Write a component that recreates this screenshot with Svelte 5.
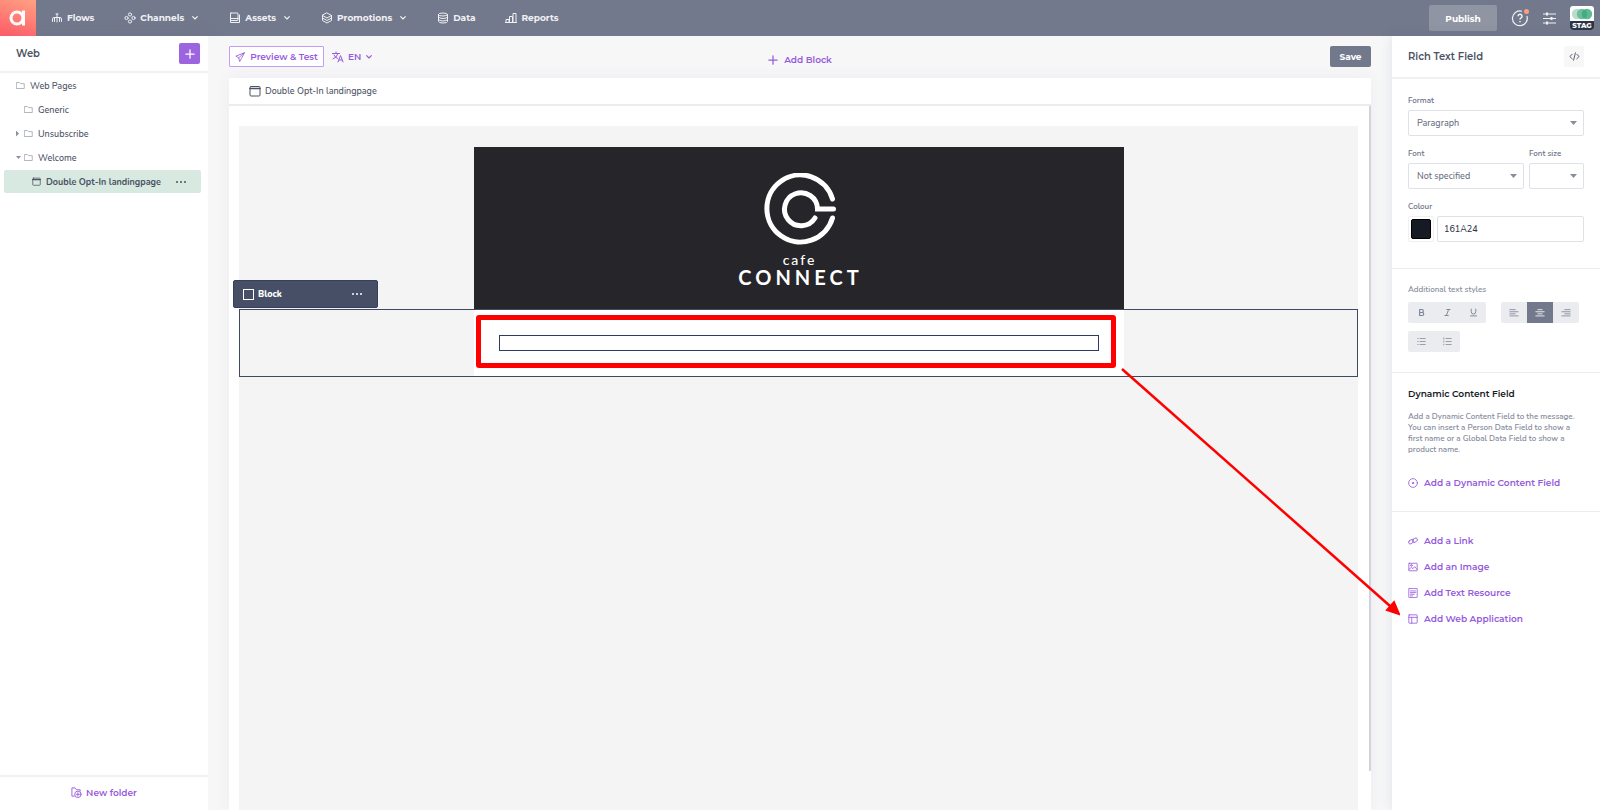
<script>
  const nav = [
    { label: 'Flows', icon: 'flows' },
    { label: 'Channels', icon: 'channels', menu: true },
    { label: 'Assets', icon: 'assets', menu: true },
    { label: 'Promotions', icon: 'promotions', menu: true },
    { label: 'Data', icon: 'data' },
    { label: 'Reports', icon: 'reports' },
  ]

  const folders = [
    { label: 'Web Pages', level: 0 },
    { label: 'Generic', level: 1 },
    { label: 'Unsubscribe', level: 1, arrow: 'closed' },
    { label: 'Welcome', level: 1, arrow: 'open' },
  ]

  const inserts = [
    { label: 'Add a Link', icon: 'link' },
    { label: 'Add an Image', icon: 'image' },
    { label: 'Add Text Resource', icon: 'text' },
    { label: 'Add Web Application', icon: 'app' },
  ]

  let align = $state('center')
  let colour = $state('161A24')
</script>

<svelte:head>
  <title>Web - Double Opt-In landingpage</title>
</svelte:head>

{#snippet icon(name, size = 12)}
  <svg class="icon" width={size} height={size} viewBox="0 0 24 24" fill="none" stroke="currentColor" stroke-width="2" stroke-linecap="round" stroke-linejoin="round" aria-hidden="true">
    {#if name === 'flows'}
      <path d="M12 4v16M3 19v-5q0-3 3-3h12q3 0 3 3v5M7 11v8M17 11v8M10 4h4"/>
    {:else if name === 'channels'}
      <circle cx="12" cy="5" r="3.2"/><circle cx="5" cy="12" r="3.2"/><circle cx="19" cy="12" r="3.2"/><circle cx="12" cy="19" r="3.2"/>
    {:else if name === 'assets'}
      <rect x="3" y="2" width="15" height="15" rx="1"/>
      <path d="M21 6v15H7M3 13h15M3 17v4h4"/>
    {:else if name === 'promotions'}
      <path d="M12 2l9 5-9 5-9-5zM3 7v10l9 5 9-5V7M3 12l9 5 9-5"/>
    {:else if name === 'data'}
      <ellipse cx="12" cy="5" rx="9" ry="3"/>
      <path d="M3 5v14q0 3 9 3t9-3V5M3 10q0 3 9 3t9-3M3 15q0 3 9 3t9-3"/>
    {:else if name === 'reports'}
      <path d="M1 21h22M2 21v-6h6v6M9 21V9h6v12M16 21V3h6v18"/>
    {:else if name === 'chevron'}
      <path d="M5 8l7 7 7-7" stroke-width="3.5"/>
    {:else if name === 'folder'}
      <path d="M2 4h7l3 3h10v13H2z"/>
    {:else if name === 'page'}
      <rect x="2" y="3" width="20" height="19" rx="2"/>
      <path d="M2 7h20" stroke-width="3"/>
    {:else if name === 'plus'}
      <path d="M12 2v20M2 12h20" stroke-width="3"/>
    {:else if name === 'send'}
      <path d="M22 2L2 10l7 4 2 8zM22 2L9 14"/>
    {:else if name === 'translate'}
      <path d="M1 5h14M8 2v3M12 5q-2 8-10 11M4 8q3 6 7 7M12 22l5-13 5 13M14 18h6"/>
    {:else if name === 'newfolder'}
      <path d="M7 20H2V2h7l3 4h8v3"/>
      <circle cx="15" cy="16" r="7"/>
      <path d="M15 12.5v7M11.5 16h7"/>
    {:else if name === 'target'}
      <circle cx="12" cy="12" r="10.5"/>
      <circle cx="12" cy="12" r="1.5" fill="currentColor"/>
    {:else if name === 'link'}
      <rect x="1" y="10" width="13" height="8" rx="4" transform="rotate(-35 7 14)"/>
      <rect x="10" y="6" width="13" height="8" rx="4" transform="rotate(-35 17 10)"/>
    {:else if name === 'image'}
      <rect x="2" y="3" width="20" height="18" rx="1"/>
      <circle cx="8" cy="8" r="2"/>
      <path d="M2 18l6-5 4 3 4-5 6 7"/>
    {:else if name === 'text'}
      <rect x="2" y="1" width="20" height="22" rx="1"/>
      <path d="M6 7h12M6 11h12M6 15h9M6 19h5"/>
    {:else if name === 'app'}
      <rect x="2" y="2" width="20" height="20" rx="1"/>
      <path d="M2 8h20M9 8v14"/>
    {:else if name === 'code'}
      <path d="M7 7l-5 5 5 5M17 7l5 5-5 5M14 4l-4 16"/>
    {:else if name === 'bold'}
      <path d="M7 4h6a4 4 0 0 1 0 8H7zM7 12h7a4 4 0 0 1 0 8H7z" stroke-width="3"/>
    {:else if name === 'italic'}
      <path d="M10 4h9M5 20h9M15 4L9 20" stroke-width="2.5"/>
    {:else if name === 'underline'}
      <path d="M6 3v7a6 6 0 0 0 12 0V3M4 21h16" stroke-width="2.5"/>
    {:else if name === 'left'}
      <path d="M2 4h13M2 9h20M2 14h13M2 19h20"/>
    {:else if name === 'center'}
      <path d="M7 4h10M2 9h20M7 14h10M2 19h20"/>
    {:else if name === 'right'}
      <path d="M9 4h13M2 9h20M9 14h13M2 19h20"/>
    {:else if name === 'bullets'}
      <path d="M8 4h14M8 12h14M8 20h14M2 4h1M2 12h1M2 20h1"/>
    {:else if name === 'numbers'}
      <path d="M8 4h14M8 12h14M8 20h14M2 2v4M2 11v2M2 19v2"/>
    {/if}
  </svg>
{/snippet}

<div class="page">
  <header class="topbar">
    <a class="logo" href="#home" aria-label="Home">
      <svg width="18" height="18" viewBox="0 0 18 18" fill="none" stroke="#fff" stroke-width="3" aria-hidden="true">
        <circle cx="8" cy="9" r="6"/>
        <path d="M14.5 1.5v15"/>
      </svg>
    </a>
    <nav>
      {#each nav as item}
        <a href="#{item.icon}">
          {@render icon(item.icon, 12)}
          <span>{item.label}</span>
          {#if item.menu}
            <span class="caret">{@render icon('chevron', 8)}</span>
          {/if}
        </a>
      {/each}
    </nav>
    <div class="top-actions">
      <button class="publish">Publish</button>
      <button class="plain help" aria-label="Help">
        <svg width="18" height="18" viewBox="0 0 18 18" fill="none" stroke="currentColor" stroke-width="1.2" aria-hidden="true">
          <path d="M11 2.2A7.4 7.4 0 1 0 15.9 7"/>
          <path d="M7 7.2a2 2 0 1 1 3 1.7q-1 .5-1 1.6M9 12v1.3" stroke-width="1.5"/>
          <circle cx="15.5" cy="2.5" r="2.5" fill="#ff9d7c" stroke="none"/>
        </svg>
      </button>
      <button class="plain" aria-label="Settings">
        <svg width="13" height="13" viewBox="0 0 13 13" stroke="currentColor" stroke-width="1" aria-hidden="true">
          <path d="M0 2h13M0 6.5h13M0 11h13"/>
          <path d="M4 .5v3M8.5 5v3M4 9.5v3" stroke-width="2"/>
        </svg>
      </button>
      <button class="account" aria-label="Account">
        <svg width="24" height="15" viewBox="0 0 24 15" aria-hidden="true">
          <circle cx="7" cy="8" r="5.2" fill="#b9dccd"/>
          <circle cx="12" cy="8" r="5.2" fill="#70bd9d"/>
          <circle cx="17" cy="8" r="5.2" fill="#36a779" fill-opacity=".8"/>
        </svg>
        <span>STAG</span>
      </button>
    </div>
  </header>

  <div class="workspace">
    <aside class="sidebar">
      <div class="sidebar-header">
        <h1>Web</h1>
        <button class="add" aria-label="Add">{@render icon('plus', 10)}</button>
      </div>
      <ul class="tree">
        {#each folders as folder}
          <li>
            <a href="#folder">
              {#if folder.level === 1}
                <span class="arrow {folder.arrow ?? ''}"></span>
              {/if}
              {@render icon('folder', 9)}
              <span>{folder.label}</span>
            </a>
          </li>
        {/each}
        <li class="selected">
          <a href="#page">
            {@render icon('page', 9)}
            <span>Double Opt-In landingpage</span>
          </a>
          <button class="plain dots" aria-label="More"><i></i><i></i><i></i></button>
        </li>
      </ul>
      <button class="new-folder">{@render icon('newfolder', 11)} New folder</button>
    </aside>

    <main>
      <div class="toolbar">
        <div class="tools">
          <button class="preview">{@render icon('send', 10)} Preview &amp; Test</button>
          <button class="link-button lang">{@render icon('translate', 12)} EN {@render icon('chevron', 8)}</button>
        </div>
        <button class="link-button add-block">{@render icon('plus', 10)} Add Block</button>
        <button class="save">Save</button>
      </div>

      <section class="document">
        <div class="document-title">{@render icon('page', 12)} Double Opt-In landingpage</div>
        <div class="scroller">
          <div class="canvas">
            <div class="banner">
              <svg width="76" height="74" viewBox="-4 0 76 74" fill="none" stroke="#fff" stroke-width="5" stroke-linecap="round" aria-hidden="true">
                <path d="M67.5 26A33.5 33.5 0 1 0 67.5 45"/>
                <path d="M50 45A16.5 16.5 0 1 1 52.5 36H68.5"/>
              </svg>
              <span class="cafe">cafe</span>
              <span class="connect">CONNECT</span>
            </div>
            <div class="block">
              <div class="block-tag">
                <span class="square"></span>
                <span>Block</span>
                <button class="plain dots" aria-label="Block options"><i></i><i></i><i></i></button>
              </div>
              <div class="block-body">
                <div class="highlight">
                  <div class="rich-text" contenteditable="true" role="textbox" tabindex="0" aria-label="Rich text"></div>
                </div>
              </div>
            </div>
          </div>
        </div>
      </section>
    </main>

    <aside class="panel">
      <div class="panel-header">
        <h2>Rich Text Field</h2>
        <button class="code" aria-label="Source">{@render icon('code', 11)}</button>
      </div>

      <section class="fields">
        <div class="field">
          <label for="format">Format</label>
          <div class="select"><select id="format"><option>Paragraph</option></select></div>
        </div>
        <div class="row">
          <div class="field grow">
            <label for="font">Font</label>
            <div class="select"><select id="font"><option>Not specified</option></select></div>
          </div>
          <div class="field size">
            <label for="size">Font size</label>
            <div class="select"><select id="size"><option></option></select></div>
          </div>
        </div>
        <div class="field">
          <label for="colour">Colour</label>
          <div class="colour">
            <button class="swatch" aria-label="Pick colour"><span style="background: #{colour}"></span></button>
            <input id="colour" type="text" bind:value={colour} />
          </div>
        </div>
      </section>

      <section class="styles">
        <p class="caption">Additional text styles</p>
        <div class="groups">
          <div class="group">
            {#each ['bold', 'italic', 'underline'] as style}
              <button aria-label={style}>{@render icon(style, 9)}</button>
            {/each}
          </div>
          <div class="group">
            {#each ['left', 'center', 'right'] as side}
              <button aria-label="Align {side}" class:active={align === side} onclick={() => (align = side)}>{@render icon(side, 10)}</button>
            {/each}
          </div>
          <div class="group">
            {#each ['bullets', 'numbers'] as list}
              <button aria-label={list}>{@render icon(list, 9)}</button>
            {/each}
          </div>
        </div>
      </section>

      <section class="dynamic">
        <h3>Dynamic Content Field</h3>
        <p>Add a Dynamic Content Field to the message. You can insert a Person Data Field to show a first name or a Global Data Field to show a product name.</p>
        <button class="link-button">{@render icon('target', 10)} Add a Dynamic Content Field</button>
      </section>

      <section class="inserts">
        {#each inserts as item}
          <button class="link-button">{@render icon(item.icon, 10)} {item.label}</button>
        {/each}
      </section>
    </aside>
  </div>

  <!-- Pointer from the text field to the panel -->
  <svg class="pointer" width="280" height="248" viewBox="0 0 280 248" aria-hidden="true">
    <path d="M2 1L270 238" stroke="#f00" stroke-width="2.5" fill="none"/>
    <path d="M279 246l-12-4 7-8z" fill="#f00" stroke="#f00" stroke-width="2"/>
  </svg>
</div>

<style>
  :global(body) {
    background: #f5f5f7;
  }

  .page {
    --purple: #965bdd;
    --slate: #73798c;
    --text: #4b5263;
    --line: #ebecf0;
    --display: Montserrat, Inter, sans-serif;
    position: relative;
    display: flex;
    flex-direction: column;
    min-height: 100vh;
    font-family: Nunito, 'Open Sans', sans-serif;
    font-size: 9px;
    font-weight: 500;
    color: var(--text);
  }

  .page * {
    box-sizing: border-box;
  }

  button, input, select {
    font: inherit;
    color: inherit;
    margin: 0;
  }

  button {
    display: flex;
    align-items: center;
    justify-content: center;
    border: 0;
    padding: 0;
    cursor: pointer;
  }

  h1, h2, h3, p, ul {
    margin: 0;
    padding: 0;
  }

  a {
    color: inherit;
    text-decoration: none;
  }

  .icon {
    flex: none;
  }

  .plain {
    background: none;
  }

  .topbar {
    display: flex;
    align-items: center;
    height: 36px;
    background: var(--slate);
    color: #f0f1f4;
    font-family: var(--display);
    font-weight: 700;
  }

  .logo {
    display: flex;
    align-items: center;
    justify-content: center;
    width: 36px;
    height: 36px;
    background: linear-gradient(200deg, #ffa184, #ff5c67);
  }

  nav {
    display: flex;
    gap: 30px;
    margin-left: 15px;
    padding-bottom: 1px;
  }

  nav a {
    display: flex;
    align-items: center;
    gap: 4px;
  }

  .caret {
    display: flex;
    margin-left: 3px;
  }

  .top-actions {
    display: flex;
    align-items: center;
    gap: 14px;
    margin-left: auto;
    padding-right: 6px;
  }

  .publish {
    width: 68px;
    height: 26px;
    background: #9095a3;
    color: #fff;
    border-radius: 2px;
  }

  .account {
    flex-direction: column;
    width: 24px;
    height: 24px;
    background: #fff;
    border-radius: 3px;
    overflow: hidden;
  }

  .account span {
    width: 100%;
    background: #2c3448;
    color: #fff;
    font-size: 7px;
    font-weight: 800;
    line-height: 9px;
  }

  .workspace {
    display: flex;
    flex: 1;
  }

  .sidebar {
    display: flex;
    flex-direction: column;
    width: 208px;
    background: #fff;
    box-shadow: 0 0 20px rgba(60, 70, 110, 0.08);
  }

  .sidebar-header {
    display: flex;
    align-items: center;
    justify-content: space-between;
    height: 37px;
    padding: 0 8px 0 16px;
    border-bottom: 2px solid #f1f1f4;
  }

  h1, h2 {
    font-family: var(--display);
    font-size: 10px;
    font-weight: 600;
  }

  .add {
    width: 21px;
    height: 21px;
    background: #9c64df;
    color: #fff;
    border-radius: 2px;
  }

  .tree {
    display: flex;
    flex-direction: column;
    gap: 1px;
    padding: 1px 7px 0 4px;
    list-style: none;
  }

  .tree li {
    display: flex;
    align-items: center;
    height: 23px;
    padding-left: 12px;
    border-radius: 2px;
  }

  .tree a {
    display: flex;
    align-items: center;
    gap: 5px;
  }

  .tree .icon {
    color: #9a9fae;
  }

  .arrow {
    width: 3px;
    height: 6px;
  }

  .arrow.closed {
    background: #8c91a1;
    clip-path: polygon(0 0, 100% 50%, 0 100%);
  }

  .arrow.open {
    width: 5px;
    height: 3px;
    margin-right: -2px;
    background: #8c91a1;
    clip-path: polygon(0 0, 100% 0, 50% 100%);
  }

  .tree .selected {
    justify-content: space-between;
    padding: 0 15px 0 28px;
    background: #d8e9e1;
    font-weight: 700;
  }

  .tree .selected .icon {
    color: var(--text);
  }

  .dots {
    gap: 2px;
  }

  .dots i {
    width: 2px;
    height: 2px;
    border-radius: 50%;
    background: currentColor;
  }

  .new-folder {
    gap: 4px;
    height: 35px;
    margin-top: auto;
    padding-bottom: 2px;
    background: #fff;
    border-top: 2px solid #f1f1f4;
    color: var(--purple);
    font-family: var(--display);
    font-weight: 600;
  }

  main {
    display: flex;
    flex: 1;
    flex-direction: column;
    min-width: 0;
    padding: 0 21px;
    background: #f7f7f8;
  }

  .toolbar {
    display: grid;
    grid-template-columns: 1fr auto 1fr;
    align-items: center;
    height: 42px;
    padding-bottom: 1px;
    font-family: var(--display);
    font-weight: 600;
  }

  .tools {
    display: flex;
    gap: 8px;
  }

  .preview {
    gap: 5px;
    width: 95px;
    height: 21px;
    background: #fff;
    border: 1px solid #c59df5;
    border-radius: 1px;
    color: var(--purple);
  }

  .link-button {
    gap: 6px;
    background: none;
    color: var(--purple);
    font-family: var(--display);
    font-weight: 600;
  }

  .lang {
    gap: 4px;
  }

  .add-block {
    padding-top: 6px;
  }

  .save {
    justify-self: end;
    width: 41px;
    height: 21px;
    background: var(--slate);
    border-radius: 2px;
    color: #fff;
    font-weight: 700;
  }

  .document {
    display: flex;
    flex: 1;
    flex-direction: column;
    background: #fff;
    box-shadow: 0 0 16px rgba(60, 70, 110, 0.06);
  }

  .document-title {
    display: flex;
    align-items: center;
    gap: 4px;
    height: 28px;
    padding-left: 20px;
    border-bottom: 2px solid #ebecf0;
  }

  .scroller {
    position: relative;
    display: flex;
    flex: 1;
    padding: 20px 13px 0 10px;
  }

  .scroller::after {
    content: '';
    position: absolute;
    top: 0;
    right: 0;
    bottom: 39px;
    width: 2px;
    background: #d0d3dc;
  }

  .canvas {
    flex: 1;
    padding-top: 21px;
    background: #f4f4f4;
  }

  .banner {
    display: flex;
    flex-direction: column;
    align-items: center;
    max-width: 650px;
    height: 162px;
    margin: 0 auto;
    padding-top: 26px;
    background: #26252a;
    color: #fff;
    font-family: Lato, sans-serif;
  }

  .cafe {
    margin-top: 5px;
    padding-left: 2px;
    font-size: 14px;
    line-height: 16px;
    letter-spacing: 2px;
  }

  .connect {
    padding-left: 4px;
    font-size: 20px;
    font-weight: 700;
    line-height: 18px;
    letter-spacing: 4px;
  }

  .block {
    position: relative;
    border: 1px solid #3f4964;
  }

  .block-tag {
    position: absolute;
    left: -7px;
    bottom: 100%;
    display: flex;
    align-items: center;
    gap: 4px;
    width: 145px;
    height: 28px;
    margin-bottom: 2px;
    padding: 0 15px 0 9px;
    background: #474f66;
    border: 1px solid #36405a;
    border-radius: 2px;
    color: #fff;
    font-weight: 800;
  }

  .square {
    width: 11px;
    height: 11px;
    border: 1px solid #fff;
  }

  .block-tag .dots {
    margin-left: auto;
  }

  .block-body {
    max-width: 650px;
    margin: 0 auto;
    padding: 5px 8px 8px 2px;
    background: #fff;
  }

  .highlight {
    padding: 15px 12px 12px 18px;
    border: 5px solid #f00;
    border-radius: 3px;
  }

  .rich-text {
    height: 16px;
    border: 1px solid #2d3b5c;
  }

  .panel {
    width: 208px;
    background: #fff;
    box-shadow: 0 0 12px rgba(60, 70, 110, 0.12);
  }

  .panel-header {
    display: flex;
    align-items: center;
    justify-content: space-between;
    height: 43px;
    padding: 0 16px;
    border-bottom: 2px solid #f1f1f4;
  }

  .code {
    width: 20px;
    height: 21px;
    background: #f7f7f8;
    border-radius: 2px;
  }

  .panel section {
    padding: 0 16px;
  }

  .panel section + section {
    border-top: 1px solid var(--line);
  }

  .panel .fields {
    display: flex;
    flex-direction: column;
    gap: 11px;
    padding-top: 15px;
    padding-bottom: 26px;
  }

  .field {
    display: flex;
    flex-direction: column;
    gap: 3px;
  }

  label, .caption {
    font-size: 8px;
    font-weight: 600;
    line-height: 13px;
    color: #697083;
  }

  .row {
    display: flex;
    gap: 5px;
  }

  .grow {
    flex: 1;
  }

  .size {
    width: 55px;
  }

  .select {
    position: relative;
  }

  .select::after {
    content: '';
    position: absolute;
    top: 11px;
    right: 7px;
    width: 7px;
    height: 4px;
    background: #888d9d;
    clip-path: polygon(0 0, 100% 0, 50% 100%);
    pointer-events: none;
  }

  select, input {
    width: 100%;
    height: 26px;
    padding: 0 8px;
    appearance: none;
    background: #fff;
    border: 1px solid #dfe1e8;
    border-radius: 2px;
    color: #697083;
  }

  .colour {
    display: flex;
    gap: 3px;
  }

  .swatch {
    flex: none;
    width: 26px;
    height: 26px;
    background: #fff;
    border: 1px solid #f0f0f4;
    border-radius: 2px;
  }

  .swatch span {
    width: 20px;
    height: 20px;
    border: 1px solid #000;
    border-radius: 2px;
  }

  input {
    padding: 0 6px;
    color: #303747;
  }

  .panel .styles {
    padding-top: 14px;
    padding-bottom: 20px;
  }

  .caption {
    color: #898f9e;
  }

  .groups {
    display: flex;
    flex-wrap: wrap;
    gap: 8px 15px;
    margin-top: 6px;
  }

  .group {
    display: flex;
    border-radius: 2px;
    overflow: hidden;
  }

  .group button {
    width: 26px;
    height: 21px;
    background: #ebecf0;
    color: #7d8495;
  }

  .group .active {
    background: var(--slate);
    color: #fff;
  }

  .panel .dynamic {
    padding-top: 14px;
    padding-bottom: 22px;
  }

  h3 {
    font-family: var(--display);
    font-size: 9px;
    font-weight: 600;
    line-height: 13px;
    color: #161a24;
  }

  .dynamic p {
    margin: 11px 0 21px;
    font-size: 8px;
    font-weight: 600;
    line-height: 11px;
    color: #858b9b;
  }

  .panel .inserts {
    display: flex;
    flex-direction: column;
    align-items: flex-start;
    gap: 13px;
    padding-top: 22px;
  }

  .panel .link-button {
    height: 13px;
  }

  .pointer {
    position: absolute;
    top: 368px;
    right: 200px;
    pointer-events: none;
  }
</style>
